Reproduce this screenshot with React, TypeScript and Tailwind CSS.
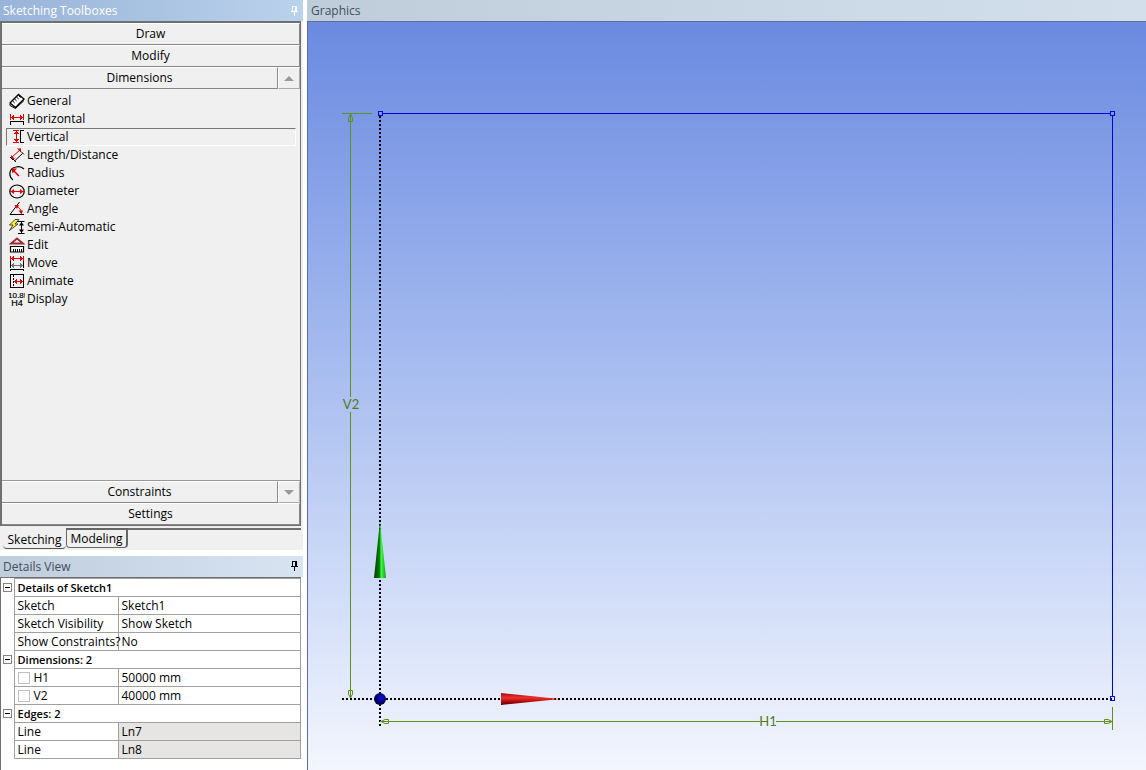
import { ReactNode, useState } from 'react';

type Tool = { name: string; icon: ReactNode };

const tools: Tool[] = [
  {
    name: 'General',
    icon: (
      <g fill="none" stroke="#000">
        <path d="M1 10 L9.5 1.5 L15 6 L6.5 14.5 Z" fill="#fff" strokeWidth="1.4" />
        <path d="M3.5 8 l2.2 2 M5.5 6 l2.2 2 M7.5 4 l2.2 2 M9.5 2.5 l2 2" />
        <path d="M1 11 v1.5 l5.5 3 l8.5 -8" />
      </g>
    ),
  },
  {
    name: 'Horizontal',
    icon: (
      <g shapeRendering="crispEdges">
        <path d="M1 3h1v6h-1z M14 3h1v6h-1z M2 6h12v1h-12z M3 5h2v3h-2z M11 5h2v3h-2z M4 4h1v5h-1z M11 4h1v5h-1z" fill="#e00000" />
        <path d="M1 10h14v1h-14z M1 10h1v4h-1z M14 10h1v4h-1z" />
      </g>
    ),
  },
  {
    name: 'Vertical',
    icon: (
      <g shapeRendering="crispEdges">
        <path d="M4 1h6v1h-6z M4 13h6v1h-6z M7 2h1v11h-1z M6 3h3v2h-3z M5 4h5v1h-5z M6 10h3v2h-3z M5 10h5v1h-5z" fill="#e00000" />
        <path d="M11 1h1v13h-1z M11 1h4v1h-4z M11 13h4v1h-4z" />
      </g>
    ),
  },
  {
    name: 'Length/Distance',
    icon: (
      <g fill="none">
        <path d="M3 10 L11 3" stroke="#e00000" />
        <path d="M2 8 V12 H6 Z M12 1.5 H8 L12 5.5 Z" fill="#e00000" />
        <path d="M5.5 14 L13.5 6.5 M12 4.5 l3 3 M4 12 l3 3 M1 10 l3 3" stroke="#000" />
      </g>
    ),
  },
  {
    name: 'Radius',
    icon: (
      <g fill="none">
        <path d="M4 15 C-1 11 0 3 7 2 C11 1 13 2 15 4" stroke="#000" strokeWidth="1.2" />
        <path d="M4 5 L10 11" stroke="#e00000" strokeWidth="1.5" />
        <path d="M2.5 3.5 H8 L3.5 8.5 Z" fill="#e00000" />
      </g>
    ),
  },
  {
    name: 'Diameter',
    icon: (
      <g fill="none">
        <ellipse cx="8" cy="8.5" rx="7.2" ry="6.5" stroke="#000" strokeWidth="1.2" />
        <path d="M1 8.5 H15" stroke="#e00000" />
        <path d="M1.500 8.5 L5 6 V11 Z M14.5 8.5 L11 6 V11 Z" fill="#e00000" />
      </g>
    ),
  },
  {
    name: 'Angle',
    icon: (
      <g fill="none">
        <path d="M10.5 1 L1 13.5 H15" stroke="#000" />
        <path d="M7 5 Q12 7 12.5 12" stroke="#e00000" />
        <path d="M5.5 4 L10 4 L8 8 Z M12.5 13.5 L9.5 9.5 H14 Z" fill="#e00000" />
      </g>
    ),
  },
  {
    name: 'Semi-Automatic',
    icon: (
      <g fill="none">
        <path d="M6 0.5 L0.5 6 H4 L0.5 11.5 L9 5 H6 L10 0.5 Z" fill="#ffee30" stroke="#222" strokeWidth="0.8" />
        <path d="M8 2.5 H15.5 M9 14.5 H15.5 M12.5 3 V14" stroke="#000" />
        <path d="M12.5 3 L15 6.5 H10 Z M12.5 14 L15 10.5 H10 Z" fill="#000" />
      </g>
    ),
  },
  {
    name: 'Edit',
    icon: (
      <g fill="none">
        <path d="M2 6.5 L8 1.5 L14 6.5 Z" stroke="#a02830" strokeWidth="1.8" />
        <path d="M1.5 9.5 H14.5 V15 H1.5 Z" fill="#fff" stroke="#000" strokeWidth="1.2" />
        <path d="M4.5 12 V15 M6.5 12 V15 M8.5 12 V15 M10.5 12 V15 M12.5 12 V15" stroke="#000" />
      </g>
    ),
  },
  {
    name: 'Move',
    icon: (
      <g shapeRendering="crispEdges">
        <path d="M1 1h1v12h-1z M14 1h1v12h-1z M1 14h14v1h-14z M1 14h1v2h-1z M14 14h1v2h-1z" />
        <path d="M1 3h14v1h-14z M1 1h1v5h-1z M14 1h1v5h-1z M3 2h2v3h-2z M11 2h2v3h-2z M4 1h1v5h-1z M11 1h1v5h-1z" fill="#e00000" />
        <path d="M2 10h12v1h-12z M3 9h2v3h-2z M11 9h2v3h-2z M4 8h1v5h-1z M11 8h1v5h-1z" fill="#707070" />
      </g>
    ),
  },
  {
    name: 'Animate',
    icon: (
      <g shapeRendering="crispEdges">
        <path d="M1.5 1.5 H14.5 V14.5 H1.5 Z" fill="none" stroke="#000" />
        <path d="M4.5 2 V14" stroke="#000" strokeDasharray="2 1" />
        <path d="M5 8h9v1h-9z M6 7h2v3h-2z M7 6h1v5h-1z M11 6h1v5h-1z M11 7h2v3h-2z" fill="#e00000" />
      </g>
    ),
  },
  {
    name: 'Display',
    icon: (
      <g fontFamily="Liberation Sans" fontSize="8" textAnchor="middle" stroke="#000" strokeWidth="0.2">
        <text x="8" y="7">10.8!</text>
        <text x="8" y="15" fontSize="9">H4</text>
      </g>
    ),
  },
];

type Row = { label: string; value: string; check?: boolean; readOnly?: boolean };

const groups: { title: string; rows: Row[] }[] = [
  {
    title: 'Details of Sketch1',
    rows: [
      { label: 'Sketch', value: 'Sketch1' },
      { label: 'Sketch Visibility', value: 'Show Sketch' },
      { label: 'Show Constraints?', value: 'No' },
    ],
  },
  {
    title: 'Dimensions: 2',
    rows: [
      { label: 'H1', value: '50000 mm', check: true },
      { label: 'V2', value: '40000 mm', check: true },
    ],
  },
  {
    title: 'Edges: 2',
    rows: [
      { label: 'Line', value: 'Ln7', readOnly: true },
      { label: 'Line', value: 'Ln8', readOnly: true },
    ],
  },
];

function Pin() {
  return (
    <button aria-label="Auto hide" className="mr-1">
      <svg width="9" height="10" viewBox="0 0 9 10" fill="currentColor" shapeRendering="crispEdges">
        <path d="M2 0h5v1h-5z M2 0h1v6h-1z M5 0h2v6h-2z M1 5h7v1h-7z M4 6h1v4h-1z" />
      </svg>
    </button>
  );
}

function Bar({ children }: { children: ReactNode }) {
  return (
    <button className="h-[22px] flex-1 border-t border-r border-b border-t-white border-r-[#888] border-b-[#888] bg-[#f0f0f0] text-center">
      {children}
    </button>
  );
}

function Scroll({ label, d }: { label: string; d: string }) {
  return (
    <button aria-label={label} className="flex w-[22px] items-center justify-center border border-t-white border-r-[#aaa] border-b-[#aaa] border-l-white">
      <svg width="10" height="5" viewBox="0 0 10 5" fill="#999">
        <path d={d} />
      </svg>
    </button>
  );
}

function Toolbox() {
  const [selected, setSelected] = useState('Vertical');
  return (
    <section className="flex flex-1 flex-col bg-[#f0f0f0]">
      <header className="flex h-[21px] items-center justify-between bg-linear-to-r from-[#98b4d8] to-[#bbd2ec] pl-[3px] text-white">
        <h2>Sketching Toolboxes</h2>
        <Pin />
      </header>
      <div className="mr-[2px] flex flex-1 flex-col border-t-2 border-r border-b border-l-2 border-[#707070]">
        <div className="flex"><Bar>Draw</Bar></div>
        <div className="flex"><Bar>Modify</Bar></div>
        <div className="flex">
          <Bar>Dimensions</Bar>
          <Scroll label="Scroll up" d="M5 0 L10 5 H0 Z" />
        </div>
        <ul className="flex-1 px-1 pt-[3px]">
          {tools.map((tool) => (
            <li key={tool.name}>
              <button
                onClick={() => setSelected(tool.name)}
                className={
                  'flex h-[18px] w-full items-center gap-[2px] border pl-[2px] ' +
                  (tool.name === selected
                    ? 'border-t-[#777] border-r-white border-b-white border-l-[#777]'
                    : 'border-transparent')
                }
              >
                <svg width="16" height="16" viewBox="0 0 16 16">{tool.icon}</svg>
                {tool.name}
              </button>
            </li>
          ))}
        </ul>
        <div className="flex border-t border-[#999]">
          <Bar>Constraints</Bar>
          <Scroll label="Scroll down" d="M0 0 H10 L5 5 Z" />
        </div>
        <div className="flex"><Bar>Settings</Bar></div>
      </div>
      <div role="tablist" className="mt-[2px] mr-[2px] flex h-[22px] items-start">
        <button role="tab" aria-selected="true" className="ml-[3px] h-[21px] w-[63px] rounded-b-sm border-b border-[#555] pt-1">
          Sketching
        </button>
        <button role="tab" aria-selected="false" className="h-[20px] w-[62px] rounded-b-sm border border-t-2 border-r-2 border-[#666]">
          Modeling
        </button>
        <div className="flex-1 border-t-2 border-[#707070]" />
      </div>
    </section>
  );
}

function Details() {
  return (
    <section className="h-[214px] bg-white">
      <header className="flex h-[21px] items-center justify-between bg-linear-to-r from-[#bfcddc] to-[#d8e4f2] pl-[3px] text-[#434e5a]">
        <h2>Details View</h2>
        <span className="text-black"><Pin /></span>
      </header>
      <div className="mr-[2px] h-[193px] border-t border-l border-[#707070]">
        <table className="w-full table-fixed border-collapse">
          <colgroup>
            <col className="w-[13px]" />
            <col className="w-[104px]" />
            <col />
          </colgroup>
          {groups.map((group) => (
            <tbody key={group.title}>
              <tr className="h-[18px]">
                <td className="p-0">
                  <button aria-label={'Collapse ' + group.title} className="ml-[2px] flex size-[9px] items-center justify-center border border-[#848484]">
                    <span className="h-px w-[5px] bg-black" />
                  </button>
                </td>
                <th colSpan={2} className="border border-[#a0a0a0] p-0 pl-[3px] text-left text-[11px] font-semibold">
                  {group.title}
                </th>
              </tr>
              {group.rows.map((row, i) => (
                <tr key={i} className="h-[18px]">
                  <td className="p-0" />
                  <td className="border border-[#a0a0a0] p-0 pl-[3px] whitespace-nowrap">
                    {row.check ? (
                      <label className="flex items-center gap-1">
                        <input type="checkbox" className="size-3 appearance-none border border-[#c0c0c0] bg-white" />
                        {row.label}
                      </label>
                    ) : (
                      row.label
                    )}
                  </td>
                  <td className={'border border-[#a0a0a0] p-0 pl-[3px] ' + (row.readOnly ? 'bg-[#e6e5e3]' : '')}>
                    {row.value}
                  </td>
                </tr>
              ))}
            </tbody>
          ))}
        </table>
      </div>
    </section>
  );
}

function Scene() {
  return (
    <svg width="838" height="748" viewBox="0 0 838 748" fill="none" className="block">
      <defs>
        <linearGradient id="green" x1="0" x2="1" y1="0" y2="0">
          <stop offset="0" stopColor="#003c00" />
          <stop offset="0.45" stopColor="#067a0c" />
          <stop offset="0.6" stopColor="#3cff3c" />
          <stop offset="1" stopColor="#08a010" />
        </linearGradient>
        <linearGradient id="red" x1="0" x2="0" y1="0" y2="1">
          <stop offset="0" stopColor="#a00808" />
          <stop offset="0.4" stopColor="#f03030" />
          <stop offset="0.65" stopColor="#c01010" />
          <stop offset="1" stopColor="#500000" />
        </linearGradient>
        <radialGradient id="ball" cx="0.6" cy="0.4">
          <stop offset="0" stopColor="#1010e0" />
          <stop offset="1" stopColor="#000050" />
        </radialGradient>
      </defs>

      {/* axes */}
      <g stroke="#000" strokeWidth="2" strokeDasharray="2 2" shapeRendering="crispEdges">
        <path d="M72 94 V704" />
        <path d="M34 677 H804" />
      </g>

      {/* dimensions */}
      <g stroke="#5f8f1c" shapeRendering="crispEdges">
        <path d="M34 91.5 H64" />
        <path d="M42.5 92 V375 M42.5 390 V676" />
        <path d="M72 699.5 H452 M468 699.5 H804" />
        <path d="M804.5 685 V708" />
      </g>
      <g stroke="#5f8f1c">
        <path d="M42.5 92 L40.5 96 V99.5 H44.5 V96 Z M42.5 676 L40.5 672 V668.5 H44.5 V672 Z" />
        <path d="M73 699.5 L77 697.500 H80.5 V701.5 H77 Z M804 699.5 L800 697.5 H796.5 V701.5 H800 Z" />
      </g>
      <g fill="#4f7a20" fontFamily="Lato" fontSize="13" textAnchor="middle">
        <text x="43" y="387">V2</text>
        <text x="460" y="704">H1</text>
      </g>

      {/* edges */}
      <g stroke="#0000e0" shapeRendering="crispEdges">
        <path d="M74 91.5 H803 M804.5 94 V674" />
        <path d="M70.5 89.5 h4 v4 h-4 z M802.5 89.5 h4 v4 h-4 z M802.5 674.5 h4 v4 h-4 z" />
      </g>

      <path d="M72 499 L78 556 H66 Z" fill="url(#green)" />
      <path d="M193 671 L252 677 L193 683 Z" fill="url(#red)" />
      <circle cx="72" cy="677" r="6" fill="url(#ball)" />
    </svg>
  );
}

export default function App() {
  return (
    <div className="flex h-screen bg-white font-['Open_Sans',sans-serif] text-[12px] leading-4 text-black">
      <aside className="flex w-[303px] shrink-0 flex-col gap-[6px]">
        <Toolbox />
        <Details />
      </aside>
      <main className="ml-1 flex min-w-0 flex-1 flex-col">
        <header className="flex h-[21px] items-center bg-linear-to-r from-[#bfcddb] to-[#d3e0ec] pl-1 text-[#434e5a]">
          <h2>Graphics</h2>
        </header>
        <div className="flex-1 overflow-hidden border-t border-l border-[#5c6ea0] bg-linear-to-b from-[#6b8ae0] to-[#f3f6fd]">
          <Scene />
        </div>
      </main>
    </div>
  );
}
